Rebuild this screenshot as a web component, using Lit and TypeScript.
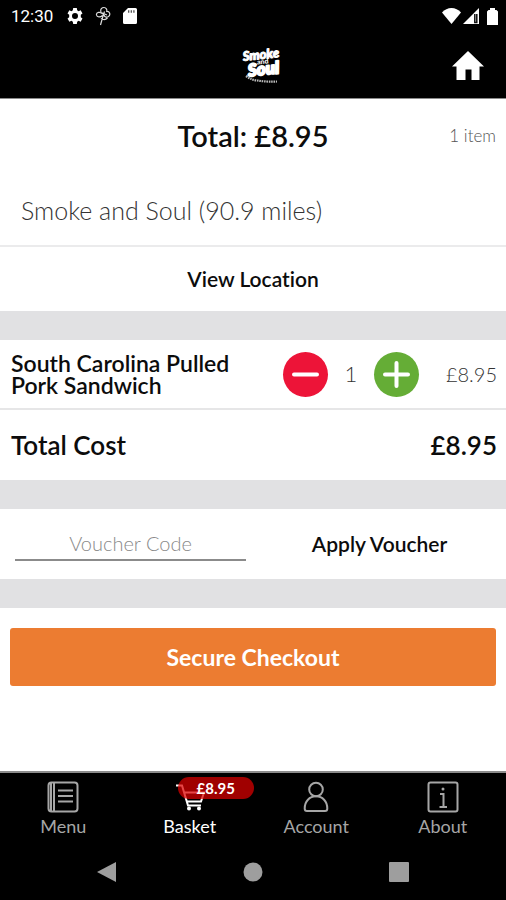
import { LitElement, html, css, svg } from "lit";
import { customElement, state, property } from "lit/decorators.js";
import { classMap } from "lit/directives/class-map.js";

const UNIT_PRICE = 8.95;
const money = (n: number) => `£${n.toFixed(2)}`;

@customElement("status-bar")
class StatusBar extends LitElement {
  static styles = css`
    :host { display: flex; align-items: center; height: 32px; padding: 0 8px 0 11px; background: #000; color: #fff; }
    .time { font: 400 17px/32px Roboto, sans-serif; }
    .left { display: flex; align-items: center; gap: 14px; flex: 1; }
    .icons { display: flex; align-items: center; gap: 12px; }
    .right { display: flex; align-items: center; gap: 2px; }
    .battery { margin-left: 6px; }
    svg { display: block; }
  `;
  render() {
    return html`
      <div class="left">
        <span class="time">12:30</span>
        <div class="icons">
          <svg width="16" height="16" viewBox="0 0 24 24" fill="#fff" aria-hidden="true">
            <path fill-rule="evenodd" d="M9.300 0h5.400l.6 3.500 2 1.200 3.200-1.200 2.700 4.600-2.500 2v3.800l2.500 2-2.700 4.600-3.200-1.200-2 1.200-.6 3.500H9.300l-.6-3.500-2-1.200-3.200 1.200L.8 15.900l2.500-2v-3.800l-2.500-2 2.700-4.600 3.200 1.200 2-1.200zM12 7.500a4.500 4.500 0 1 0 0 9 4.500 4.500 0 0 0 0-9z" />
          </svg>
          <svg width="16" height="20" viewBox="0 0 16 20" fill="none" stroke="#ddd" stroke-width="1.200" aria-hidden="true">
            <path d="M6 6C5 3 7 1.500 9 1.500S12.500 3.500 11.500 6M11.500 5.500c3-.5 4.500 3 2 5-2 1.300-4 .5-4.500-1.500M8 8C5 5 1 6.500 1.500 9c.5 2.500 4 2.500 6 .5M5.500 19 8 10 9.500 5.500M6 12.500c2.500 1.500 5 1 6.500-.5M6 6.500l6 2.500" />
          </svg>
          <svg width="14" height="16" viewBox="0 0 14 16" aria-hidden="true">
            <path fill="#fff" d="M5 0h7.500A1.500 1.500 0 0 1 14 1.500v13a1.500 1.500 0 0 1-1.500 1.500h-11A1.500 1.500 0 0 1 0 14.500V5z" />
            <path stroke="#444" stroke-width="1.200" d="M5.700 2.200v2.500M8.300 2.200v2.500M10.900 2.200v2.500" />
          </svg>
        </div>
      </div>
      <div class="right">
        <svg width="19" height="16" viewBox="0 0 19 16" fill="#fff" aria-hidden="true"><path d="M0 4.500C5-1.500 14-1.500 19 4.500L9.500 16z" /></svg>
        <svg width="16" height="16" viewBox="0 0 16 16" aria-hidden="true">
          <path fill="#fff" d="M0 16 16 0v16z" /><path stroke="#111" stroke-width="1.500" fill="none" d="M11.800 6v8.500h2V6" />
        </svg>
        <svg class="battery" width="11" height="17" viewBox="0 0 11 17" fill="#fff" aria-hidden="true"><path d="M3 0h5v2h1.500L11 3.500V17H0V3.500L1.500 2H3z" /></svg>
      </div>
    `;
  }
}

@customElement("brand-header")
class BrandHeader extends LitElement {
  static styles = css`
    :host { display: grid; grid-template-columns: 1fr auto 1fr; align-items: center; height: 67px; padding: 0 22px; background: #000; border-bottom: 1px solid #8a8a8a; box-sizing: border-box; }
    .logo { grid-column: 2; display: block; margin-left: 18px; }
    .word { font: italic 900 13px "Lato", sans-serif; }
    .big { font-size: 17px; }
    .small { font: 900 7px "Lato", sans-serif; }
    .home { justify-self: end; padding: 0; border: 0; background: none; cursor: pointer; }
    .home svg { display: block; }
  `;
  render() {
    return html`
      <svg class="logo" width="48" height="44" viewBox="0 0 48 44" role="img" aria-label="Smoke and Soul">
        <g transform="rotate(-6 24 22)" fill="#fff" stroke="#fff" text-anchor="middle" stroke-linejoin="round">
          <text class="word" x="24" y="16" stroke-width="1">Smoke</text>
          <text class="small" x="25" y="21" stroke-width="0">and</text>
          <text class="word big" x="25" y="32" stroke-width="2">Soul</text>
        </g>
        <path d="M8 33c4 3 7 4 11 4.500s9 1.500 20 1" fill="none" stroke="#bbb" stroke-width="2.200" stroke-dasharray="1.600 .8" />
      </svg>
      <button class="home" aria-label="Home">
        <svg width="32" height="29" viewBox="0 0 32 29" fill="#fff" aria-hidden="true"><path d="M16 0 32 15.500H27.500V29H19.500V18.500H13.500V29H4.500V15.500H0z" /></svg>
      </button>
    `;
  }
}

@customElement("tab-bar")
class TabBar extends LitElement {
  @property() total = "";
  static styles = css`
    :host { display: grid; grid-template-columns: repeat(4, 1fr); height: 73px; border-top: 2px solid #8c8c8c; box-sizing: border-box; background: #000; }
    .tab { position: relative; display: flex; flex-direction: column; align-items: center; gap: 1px; padding-top: 8px; color: #a6a6a6; text-decoration: none; font: 400 18px/24px "Lato", sans-serif; }
    .active { color: #fff; }
    .icon { display: block; width: 32px; height: 32px; fill: none; stroke: currentColor; stroke-width: 2; }
    .badge { position: absolute; top: 4px; left: 50%; box-sizing: border-box; width: 76px; height: 22px; margin-left: -12px; border-radius: 11px; background: rgba(222, 0, 0, 0.72); color: #fff; font: 700 15px/22px "Lato", sans-serif; text-align: center; }
  `;
  private icons = {
    Menu: svg`<rect x="1.500" y="1.500" width="29" height="29" rx="3" /><path d="M4 2v28M7 2v28M11 9.500H26M11 15H26M11 20.500H26" />`,
    Basket: svg`<path d="M2 4.500H8L14 24.500H27M9.500 11.500H30L27 20.500H12.500" /><circle cx="15" cy="27.500" r="2" fill="currentColor" stroke="none" /><circle cx="25" cy="27.500" r="2" fill="currentColor" stroke="none" />`,
    Account: svg`<circle cx="16" cy="8.500" r="6.800" /><path d="M16 15.300c6.500 0 11.300 5 11.300 12.200 0 1.600-.8 2.500-2.300 2.500H7c-1.500 0-2.300-.9-2.300-2.500 0-7.200 4.800-12.200 11.300-12.200z" />`,
    About: svg`<rect x="1.500" y="1.500" width="29" height="29" rx="2" /><path d="M13 13h3.500v13M12.500 26h7.500" /><circle cx="16" cy="8" r="1.500" fill="currentColor" stroke="none" />`,
  };
  render() {
    return html`${Object.entries(this.icons).map(([name, icon]) => html`
      <a href="#" class=${classMap({ tab: true, active: name === "Basket" })}>
        <svg class="icon" viewBox="0 0 32 32" aria-hidden="true">${icon}</svg>
        <span>${name}</span>
        ${name === "Basket" ? html`<span class="badge">${this.total}</span>` : ""}
      </a>`)}`;
  }
}

@customElement("system-nav")
class SystemNav extends LitElement {
  static styles = css`
    :host { display: flex; justify-content: center; align-items: center; gap: 106px; height: 56px; background: #000; }
    button { display: grid; place-items: center; width: 40px; height: 40px; padding: 0; border: 0; background: none; }
  `;
  render() {
    return html`
      <button aria-label="Back"><svg width="20" height="22" fill="#9e9e9e"><path d="M0 11 19 1V21z" /></svg></button>
      <button aria-label="Home"><svg width="20" height="20" fill="#9e9e9e"><circle cx="10" cy="10" r="9.500" /></svg></button>
      <button aria-label="Recent apps"><svg width="20" height="20" fill="#9e9e9e"><rect width="20" height="20" rx="1" /></svg></button>
    `;
  }
}

@customElement("app-root")
class AppRoot extends LitElement {
  @state() private count = 1;
  static styles = css`
    :host { display: flex; flex-direction: column; min-height: 100vh; background: #fff; color: #0c0c0c; font: 400 21px/24px "Lato", sans-serif; font-variant-ligatures: none; }
    main { flex: 1; }
    h1, h2, p { margin: 0; font: inherit; }
    button { font: inherit; color: inherit; border: 0; padding: 0; background: none; cursor: pointer; font-variant-ligatures: none; }
    .summary { display: grid; grid-template-columns: 1fr auto 1fr; align-items: center; height: 74px; padding: 0 10px; }
    .total { grid-column: 2; font-size: 29px; font-weight: 600; }
    .items { justify-self: end; color: #555; font-size: 17px; font-weight: 300; }
    .venue { height: 74px; padding-left: 21px; border-bottom: 2px solid #ebebec; box-sizing: border-box; color: #333; font-size: 25px; font-weight: 300; line-height: 74px; }
    .location { display: block; width: 100%; height: 64px; font-weight: 600; }
    .band { height: 29px; background: #e1e1e3; }
    .line { display: flex; align-items: center; height: 70px; padding: 0 9px 0 11px; border-bottom: 2px solid #e6e6e7; box-sizing: border-box; }
    .name { flex: 1; font-size: 23px; font-weight: 600; line-height: 22px; }
    .name span { display: block; max-width: 250px; }
    .stepper { display: flex; align-items: center; color: #333; font-weight: 300; font-size: 22px; }
    .qty { width: 46px; text-align: center; }
    .round { display: grid; place-items: center; width: 45px; height: 45px; border-radius: 50%; }
    .round svg { stroke: #fff; stroke-width: 4; stroke-linecap: round; }
    .minus { background: #ed1438; }
    .plus { background: #65ad36; }
    .price { width: 78px; text-align: right; color: #333; font-size: 20px; font-weight: 300; }
    .cost { display: flex; justify-content: space-between; align-items: center; height: 70px; padding: 0 9px 0 11px; font-size: 26px; font-weight: 600; }
    .voucher { display: grid; grid-template-columns: 1fr 1fr; align-items: center; height: 70px; }
    .code { margin: 0 7px 0 15px; height: 32px; min-width: 0; padding: 0; border: 0; border-bottom: 2px solid #8b8b8b; background: none; text-align: center; font: 300 20px/24px "Lato", sans-serif; outline: 0; }
    .code::placeholder { color: #8a8a8a; opacity: 1; }
    .apply { font-weight: 600; }
    .action { padding: 20px 10px; }
    .checkout { display: block; width: 100%; height: 58px; border-radius: 3px; background: #ec7c31; color: #fff; font-size: 23px; font-weight: 700; }
  `;
  render() {
    const sum = money(this.count * UNIT_PRICE);
    return html`
      <status-bar></status-bar>
      <brand-header></brand-header>
      <main>
        <section class="summary">
          <h1 class="total">Total: ${sum}</h1>
          <span class="items">${this.count} ${this.count === 1 ? "item" : "items"}</span>
        </section>
        <p class="venue">Smoke and Soul (90.9 miles)</p>
        <button class="location">View Location</button>
        <div class="band"></div>
        <section class="line">
          <h2 class="name"><span>South Carolina Pulled Pork Sandwich</span></h2>
          <div class="stepper">
            <button class="round minus" aria-label="Remove one" @click=${() => (this.count = Math.max(0, this.count - 1))}>
              <svg width="29" height="29"><path d="M3 14.500H26" /></svg>
            </button>
            <span class="qty">${this.count}</span>
            <button class="round plus" aria-label="Add one" @click=${() => this.count++}>
              <svg width="29" height="29"><path d="M3 14.500H26M14.500 3V26" /></svg>
            </button>
          </div>
          <span class="price">${sum}</span>
        </section>
        <section class="cost"><span>Total Cost</span><span>${sum}</span></section>
        <div class="band"></div>
        <section class="voucher">
          <input class="code" type="text" placeholder="Voucher Code" aria-label="Voucher Code" />
          <button class="apply">Apply Voucher</button>
        </section>
        <div class="band"></div>
        <div class="action"><button class="checkout">Secure Checkout</button></div>
      </main>
      <tab-bar .total=${sum}></tab-bar>
      <system-nav></system-nav>
    `;
  }
}
